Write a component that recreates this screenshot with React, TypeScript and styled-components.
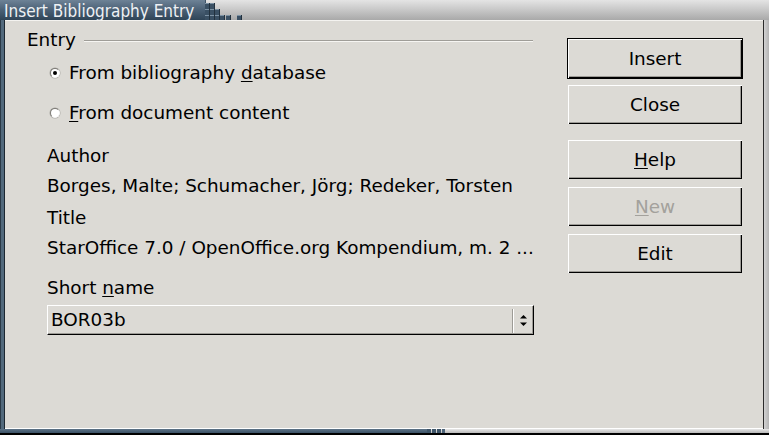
import styled, { createGlobalStyle } from "styled-components"

const GlobalStyle = createGlobalStyle`
	html, body {
		margin: 0;
		padding: 0;
		background: #000;
	}
	body {
		font-family: "DejaVu Sans", "Bitstream Vera Sans", sans-serif;
	}
`

// little square "pixels" of the staircase at the end of the dark title part
const stairBlocks = [
	[0, 3], [5, 3],
	[0, 9], [5, 9], [10, 9],
	[0, 15], [5, 15], [10, 15], [15, 15], [21, 15], [32, 15],
]

export default function App() {
	return (
		<>
			<GlobalStyle />
			<Frame>
				<TitleBar>
					<TitleDark>Insert Bibliography Entry</TitleDark>
					<Stairs width="45" height="20" viewBox="0 0 45 20">
						<rect x="0" y="0" width="1" height="20" fill="#3e5468" />
						{stairBlocks.map(([x, y]) => (
							<g key={`${x}-${y}`}>
								<rect x={x} y={y} width="5" height={y === 15 ? 5 : 6} fill="#3a5064" />
								<rect x={x} y={y} width="5" height="1" fill="#7d92a4" />
								<rect x={x + 4} y={y} width="1" height={y === 15 ? 5 : 6} fill="#22313e" />
							</g>
						))}
					</Stairs>
				</TitleBar>
				<Middle>
					<LeftEdge />
					<Content>
						<LeftColumn>
							<GroupHeader>
								<span>Entry</span>
								<GroupLine />
							</GroupHeader>
							<Indent>
								<RadioRow $gap={13}>
									<Radio $checked />
									<span>
										From bibliography <Key>d</Key>atabase
									</span>
								</RadioRow>
								<RadioRow $gap={20}>
									<Radio />
									<span>
										<Key>F</Key>rom document content
									</span>
								</RadioRow>
								<Line $gap={23}>Author</Line>
								<Line $gap={10}>Borges, Malte; Schumacher, Jörg; Redeker, Torsten</Line>
								<Line $gap={12}>Title</Line>
								<Line $gap={10}>StarOffice 7.0 / OpenOffice.org Kompendium, m. 2 ...</Line>
								<Line $gap={20}>
									Short <Key>n</Key>ame
								</Line>
								<Combo>
									<ComboText>BOR03b</ComboText>
									<ComboSpin>
										<svg width="9" height="13" viewBox="0 0 9 13">
											<path d="M4.5 1L8 4.5H1z" fill="#000" />
											<path d="M1 8.5h7L4.5 12z" fill="#000" />
										</svg>
									</ComboSpin>
								</Combo>
							</Indent>
						</LeftColumn>
						<ButtonColumn>
							<Button $isDefault>Insert</Button>
							<Button $gap={5}>Close</Button>
							<Button $gap={14}>
								<Key>H</Key>elp
							</Button>
							<Button $gap={6} $disabled>
								<Key>N</Key>ew
							</Button>
							<Button $gap={6}>Edit</Button>
						</ButtonColumn>
					</Content>
					<RightEdge />
				</Middle>
				<BottomBar>
					<BottomDark />
					<svg width="20" height="4" viewBox="0 0 20 4">
						<rect x="0" y="0" width="4" height="4" fill="#3d5468" />
						<rect x="5" y="0" width="4" height="4" fill="#3d5468" />
						<rect x="10" y="0" width="4" height="4" fill="#3d5468" />
						<rect x="15" y="0" width="3" height="4" fill="#4c6378" />
					</svg>
				</BottomBar>
			</Frame>
		</>
	)
}

const Frame = styled.div`
	width: 769px;
	height: 435px;
	display: flex;
	flex-direction: column;
	overflow: hidden;
	background: #dcdad5;
`

const TitleBar = styled.div`
	height: 20px;
	flex: none;
	display: flex;
	background: linear-gradient(#e4e4e4, #c4c4c4 55%, #a9a9a9);
`

const TitleDark = styled.div`
	width: 205px;
	height: 20px;
	padding-left: 4px;
	box-sizing: border-box;
	background: linear-gradient(#6d8296, #4a6075 50%, #2f4457);
	color: #eef1f4;
	font-family: "DejaVu Sans Condensed", "DejaVu Sans", sans-serif;
	font-stretch: condensed;
	font-size: 17px;
	line-height: 23px;
	white-space: nowrap;
`

const Stairs = styled.svg`
	flex: none;
	display: block;
`

const Middle = styled.div`
	flex: 1;
	display: flex;
	min-height: 0;
`

const LeftEdge = styled.div`
	width: 5px;
	box-sizing: border-box;
	border-left: 1px solid #2b3a47;
	border-right: 1px solid #1c2731;
	background: #52697c;
`

const RightEdge = styled.div`
	width: 6px;
	box-sizing: border-box;
	border-left: 1px solid #2a2a2a;
	background: linear-gradient(90deg, #d2d2d2, #b4b4b4);
`

const Content = styled.div`
	flex: 1;
	display: flex;
	gap: 34px;
	padding: 9px 0 0 22px;
	border-top: 1px solid #f4f3f0;
	border-bottom: 1px solid #ffffff;
	background: #dcdad5;
	font-size: 18.4px;
	line-height: 20px;
	color: #000;
`

const LeftColumn = styled.div`
	width: 506px;
	display: flex;
	flex-direction: column;
`

const GroupHeader = styled.div`
	display: flex;
	align-items: center;
	height: 20px;
	gap: 8px;
`

const GroupLine = styled.div`
	flex: 1;
	height: 1px;
	background: #9f9d98;
	box-shadow: 0 1px 0 #f6f5f2;
`

const Indent = styled.div`
	padding-left: 20px;
	display: flex;
	flex-direction: column;
`

const Line = styled.div<{ $gap: number }>`
	margin-top: ${(p) => p.$gap}px;
	height: 20px;
	white-space: nowrap;
`

const RadioRow = styled(Line)`
	display: flex;
	align-items: center;
	padding-left: 3px;
	gap: 9px;
`

const Radio = styled.span<{ $checked?: boolean }>`
	position: relative;
	width: 10px;
	height: 10px;
	box-sizing: border-box;
	border-radius: 50%;
	border: 1px solid;
	border-color: #7d7b76 #f4f4f4 #f4f4f4 #7d7b76;
	background: #fff;
	box-shadow: 0 0 0 0.5px #a9a7a2;
	&::after {
		content: "";
		display: ${(p) => (p.$checked ? "block" : "none")};
		position: absolute;
		left: 2px;
		top: 2px;
		width: 4px;
		height: 4px;
		border-radius: 50%;
		background: #000;
	}
`

const Key = styled.span`
	text-decoration: underline;
	text-underline-offset: 2px;
`

const Combo = styled.div`
	margin-top: 7px;
	width: 487px;
	height: 30px;
	box-sizing: border-box;
	display: flex;
	align-items: center;
	background: #dcdad5;
	border-top: 1px solid #ffffff;
	border-left: 1px solid #ffffff;
	border-right: 1px solid #000;
	border-bottom: 1px solid #000;
	box-shadow: inset -1px -1px 0 #9d9b96;
`

const ComboText = styled.span`
	flex: 1;
	padding-left: 3px;
`

const ComboSpin = styled.div`
	width: 20px;
	height: 24px;
	margin-top: 1px;
	display: flex;
	align-items: center;
	justify-content: center;
	border-left: 1px solid #9d9b96;
	box-shadow: inset 1px 0 0 #ffffff;
	svg {
		display: block;
	}
`

const ButtonColumn = styled.div`
	width: 176px;
	padding-top: 8px;
	display: flex;
	flex-direction: column;
`

const Button = styled.div<{ $gap?: number; $isDefault?: boolean; $disabled?: boolean }>`
	margin-top: ${(p) => p.$gap ?? 0}px;
	height: 41px;
	box-sizing: border-box;
	display: flex;
	align-items: center;
	justify-content: center;
	border: 1px solid ${(p) => (p.$isDefault ? "#000" : "transparent")};
	box-shadow: inset 1px 1px 0 #ffffff, inset -1px -1px 0 #000, inset -2px -2px 0 #9d9b96;
	color: ${(p) => (p.$disabled ? "#a3a19c" : "#000")};
`

const BottomBar = styled.div`
	height: 6px;
	flex: none;
	display: flex;
	box-sizing: border-box;
	border-bottom: 2px solid #000;
	background: linear-gradient(#e8e8e8, #b9b9b9);
	svg {
		display: block;
		flex: none;
	}
`

const BottomDark = styled.div`
	width: 427px;
	background: linear-gradient(#5d7387, #3b5165);
`
